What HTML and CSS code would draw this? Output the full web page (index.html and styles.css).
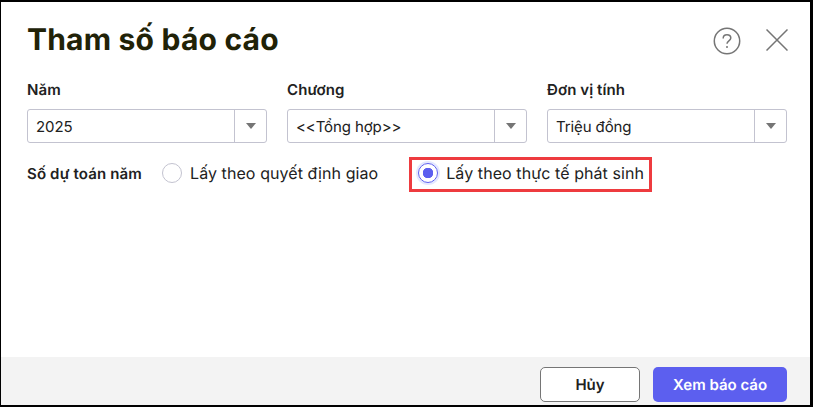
FILE: index.html
```html
<!DOCTYPE html>
<html>
<head>
    <meta charset="utf-8">
    <title>Tham số báo cáo</title>
    <link rel="stylesheet" href="styles.css">
</head>
<body>
    <div class="dialog">
        <div class="dialog-body">
            <div class="header">
                <h1>Tham số báo cáo</h1>
                <div class="header-icons">
                    <svg class="icon" width="28" height="28" viewBox="0 0 28 28" fill="none" stroke="#757575">
                        <circle cx="14" cy="14" r="12.7" stroke-width="1.5"/>
                        <path d="M10.2 11.4c0-2.2 1.7-3.6 3.8-3.6s3.8 1.3 3.8 3.3c0 2.8-3.8 2.9-3.8 5.6" stroke-width="1.5"/>
                        <circle cx="14" cy="20" r="1" fill="#757575" stroke="none"/>
                    </svg>
                    <svg class="icon icon-close" width="22" height="22" viewBox="0 0 22 22" fill="none" stroke="#757575" stroke-width="1.5">
                        <path d="M0.5 0.5l21 21M21.5 0.5l-21 21"/>
                    </svg>
                </div>
            </div>

            <div class="fields">
                <div class="field">
                    <label>Năm</label>
                    <div class="select">
                        <span class="select-value">2025</span>
                        <span class="select-btn"><i class="caret"></i></span>
                    </div>
                </div>
                <div class="field">
                    <label>Chương</label>
                    <div class="select">
                        <span class="select-value">&lt;&lt;Tổng hợp&gt;&gt;</span>
                        <span class="select-btn"><i class="caret"></i></span>
                    </div>
                </div>
                <div class="field">
                    <label>Đơn vị tính</label>
                    <div class="select">
                        <span class="select-value">Triệu đồng</span>
                        <span class="select-btn"><i class="caret"></i></span>
                    </div>
                </div>
            </div>

            <div class="radio-row">
                <span class="radio-title">Số dự toán năm</span>
                <div class="radio-option">
                    <span class="radio"></span>
                    <span>Lấy theo quyết định giao</span>
                </div>
                <div class="radio-option highlighted">
                    <span class="radio checked"></span>
                    <span>Lấy theo thực tế phát sinh</span>
                </div>
            </div>
        </div>

        <div class="footer">
            <button class="btn btn-secondary">Hủy</button>
            <button class="btn btn-primary">Xem báo cáo</button>
        </div>
    </div>
</body>
</html>
```

FILE: styles.css
```css
html, body {
    height: 100%;
}

body {
    margin: 0;
    font-family: Inter, "Liberation Sans", sans-serif;
    text-rendering: geometricPrecision;
    background: white;
}

.dialog {
    box-sizing: border-box;
    height: 407px;
    border-style: solid;
    border-color: black;
    border-width: 2px 3px 2px 1px;
    display: flex;
    flex-direction: column;
}

.dialog-body {
    flex: 1;
    padding: 0 23px 0 26px;
}

.header {
    height: 78px;
    display: flex;
    align-items: flex-start;
    justify-content: space-between;
}

h1 {
    margin: 19px 0 0;
    font-size: 30px;
    line-height: 38px;
    font-weight: 700;
    letter-spacing: 0.2px;
    color: #212207;
}

.header-icons {
    display: flex;
    gap: 25px;
    margin: 25px -1px 0 0;
    align-items: flex-start;
}

.icon {
    display: block;
}

.icon-close {
    margin-top: 2px;
}

.fields {
    display: grid;
    grid-template-columns: repeat(3, 240px);
    gap: 20px;
}

.field label {
    display: block;
    font-size: 15px;
    line-height: 20px;
    font-weight: 600;
    letter-spacing: 0.1px;
    color: #212121;
    margin-bottom: 9px;
}

.select {
    box-sizing: border-box;
    height: 34px;
    display: flex;
    border: 1px solid #c3c3d0;
    border-radius: 3px;
    font-size: 15px;
    letter-spacing: -0.1px;
    color: #212121;
}

.select-value {
    flex: 1;
    padding-left: 8px;
    line-height: 33px;
}

.select-btn {
    box-sizing: border-box;
    width: 32px;
    border-left: 1px solid #c3c3d0;
    display: flex;
    align-items: center;
    justify-content: center;
}

.caret {
    width: 0;
    height: 0;
    border-left: 5px solid transparent;
    border-right: 5px solid transparent;
    border-top: 6px solid #757575;
}

.radio-row {
    margin-top: 14px;
    display: flex;
    align-items: center;
    font-size: 16px;
    color: #212121;
    height: 32px;
}

.radio-title {
    font-size: 15px;
    font-weight: 600;
    letter-spacing: 0.15px;
    width: 135px;
}

.radio-option {
    display: flex;
    align-items: center;
    gap: 8px;
    letter-spacing: 0.08px;
    white-space: nowrap;
}

.highlighted {
    box-sizing: border-box;
    align-self: flex-start;
    height: 35px;
    margin-left: 31px;
    padding: 0 6px 3px;
    border: 3px solid #ee3b3f;
    width: 243px;
}

.radio {
    box-sizing: border-box;
    width: 20px;
    height: 20px;
    border: 1px solid #c3c3d0;
    border-radius: 50%;
    background: white;
    flex-shrink: 0;
}

.radio.checked {
    border-color: #5c5fef;
    background: radial-gradient(circle, #5c5fef 0 5px, white 5.5px);
    box-shadow: 0 0 0 2px #e4e8ff;
}

.footer {
    height: 48px;
    background: #f3f3f3;
    padding: 10px 23px 0 0;
    display: flex;
    justify-content: flex-end;
    gap: 13px;
    box-sizing: border-box;
}

.btn {
    box-sizing: border-box;
    height: 35px;
    border-radius: 5px;
    font-family: inherit;
    font-size: 15px;
    font-weight: 600;
    text-rendering: geometricPrecision;
    cursor: pointer;
}

.btn-secondary {
    width: 100px;
    background: white;
    border: 1px solid #757575;
    color: #212121;
}

.btn-primary {
    width: 134px;
    background: #5c5fef;
    border: none;
    color: white;
}
```
